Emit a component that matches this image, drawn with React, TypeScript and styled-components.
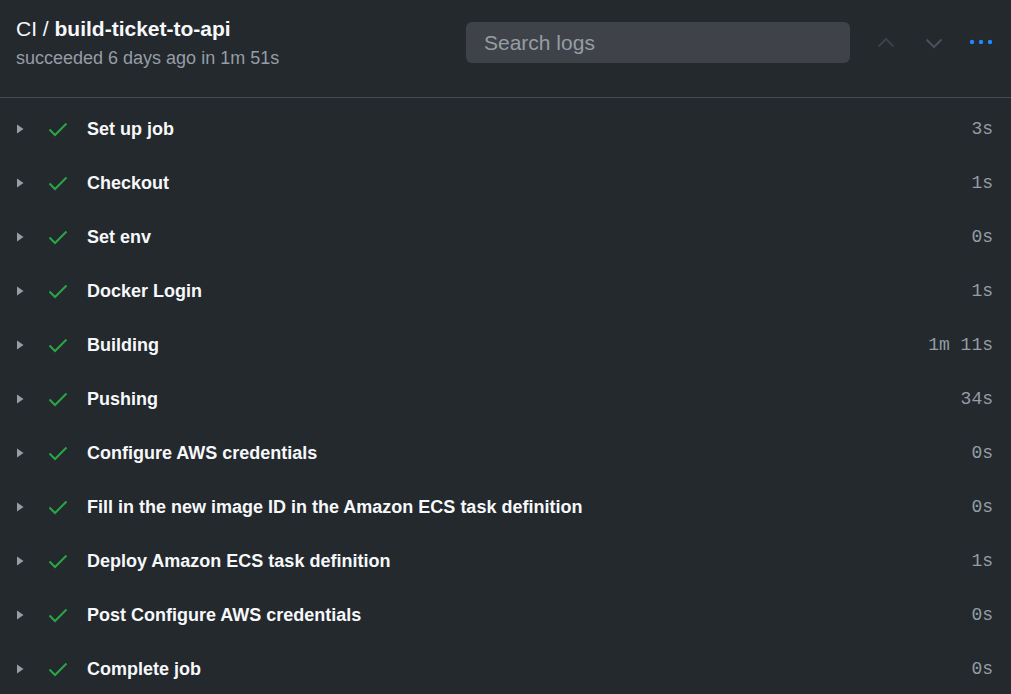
import * as React from 'react';
import styled, { createGlobalStyle } from 'styled-components';

const steps: { name: string; time: string }[] = [
  { name: 'Set up job', time: '3s' },
  { name: 'Checkout', time: '1s' },
  { name: 'Set env', time: '0s' },
  { name: 'Docker Login', time: '1s' },
  { name: 'Building', time: '1m 11s' },
  { name: 'Pushing', time: '34s' },
  { name: 'Configure AWS credentials', time: '0s' },
  { name: 'Fill in the new image ID in the Amazon ECS task definition', time: '0s' },
  { name: 'Deploy Amazon ECS task definition', time: '1s' },
  { name: 'Post Configure AWS credentials', time: '0s' },
  { name: 'Complete job', time: '0s' },
];

const App = () => (
  <>
    <GlobalStyle />
    <Page>
      <Header>
        <TitleBlock>
          <Title>
            CI / <strong>build-ticket-to-api</strong>
          </Title>
          <Subtitle>succeeded 6 days ago in 1m 51s</Subtitle>
        </TitleBlock>
        <SearchBox placeholder="Search logs" />
        <NavButton aria-label="Previous" $tone="#3a4149">
          <svg width="20" height="20" viewBox="0 0 20 20">
            <path d="M2.5 13.5 10 6l7.5 7.5" fill="none" stroke="currentColor" strokeWidth="2" />
          </svg>
        </NavButton>
        <NavButton aria-label="Next" $tone="#48505b">
          <svg width="20" height="20" viewBox="0 0 20 20">
            <path d="M2.5 6.5 10 14l7.5-7.5" fill="none" stroke="currentColor" strokeWidth="2" />
          </svg>
        </NavButton>
        <MoreButton aria-label="More">
          <svg width="24" height="8" viewBox="0 0 24 8">
            <circle cx="3" cy="4" r="2.2" fill="currentColor" />
            <circle cx="12" cy="4" r="2.2" fill="currentColor" />
            <circle cx="21" cy="4" r="2.2" fill="currentColor" />
          </svg>
        </MoreButton>
      </Header>

      <StepList>
        {steps.map((s) => (
          <StepRow key={s.name}>
            <Caret>
              <svg width="8" height="10" viewBox="0 0 8 10">
                <path d="M1 0.5v9l6.5-4.5z" fill="currentColor" />
              </svg>
            </Caret>
            <Check>
              <svg width="20" height="16" viewBox="0 0 20 16">
                <path d="M1.5 8.5l5.5 5.5L18.5 2.5" fill="none" stroke="currentColor" strokeWidth="2" />
              </svg>
            </Check>
            <StepName>{s.name}</StepName>
            <Duration>{s.time}</Duration>
          </StepRow>
        ))}
      </StepList>
    </Page>
  </>
);

const GlobalStyle = createGlobalStyle`
  html, body {
    margin: 0;
    background: #24292e;
  }
  body {
    font-family: "Liberation Sans", Arial, sans-serif;
  }
`;

const Page = styled.div`
  width: 1011px;
  min-height: 694px;
  background: #24292e;
  color: #f6f8fa;
`;

const Header = styled.header`
  display: flex;
  align-items: center;
  height: 98px;
  box-sizing: border-box;
  padding: 0 18px 0 16px;
  border-bottom: 1px solid #444d56;
`;

const TitleBlock = styled.div`
  display: flex;
  flex-direction: column;
  gap: 6px;
  flex: 1;
  margin-top: -12px;
`;

const Title = styled.div`
  font-size: 21px;
  line-height: 24px;
  color: #f6f8fa;

  strong {
    font-weight: 700;
  }
`;

const Subtitle = styled.div`
  font-size: 18px;
  line-height: 22px;
  color: #959da5;
`;

const SearchBox = styled.input`
  width: 384px;
  height: 41px;
  box-sizing: border-box;
  margin-top: -12px;
  border: none;
  border-radius: 6px;
  background: #3f4349;
  padding: 0 18px;
  font-family: "Liberation Sans", Arial, sans-serif;
  font-size: 21px;
  color: #e1e4e8;
  outline: none;

  &::placeholder {
    color: #959da5;
  }
`;

const NavButton = styled.button<{ $tone: string }>`
  display: flex;
  align-items: center;
  justify-content: center;
  width: 24px;
  height: 24px;
  margin-top: -12px;
  margin-left: 24px;
  padding: 0;
  border: none;
  background: none;
  color: ${(p) => p.$tone};
`;

const MoreButton = styled.button`
  display: flex;
  align-items: center;
  justify-content: center;
  margin-top: -14px;
  margin-left: 23px;
  padding: 0;
  border: none;
  background: none;
  color: #2188ff;
`;

const StepList = styled.div`
  display: flex;
  flex-direction: column;
  padding-top: 4px;
`;

const StepRow = styled.div`
  display: flex;
  align-items: center;
  height: 54px;
  padding: 0 18px 0 16px;
`;

const Caret = styled.span`
  display: flex;
  width: 8px;
  color: #959da5;
`;

const Check = styled.span`
  display: flex;
  margin-left: 24px;
  width: 20px;
  color: #28a745;
`;

const StepName = styled.span`
  flex: 1;
  margin-left: 19px;
  font-size: 18px;
  font-weight: 700;
  color: #f6f8fa;
`;

const Duration = styled.span`
  font-family: "Liberation Mono", "Courier New", monospace;
  font-size: 18px;
  color: #959da5;
`;

export default App;
